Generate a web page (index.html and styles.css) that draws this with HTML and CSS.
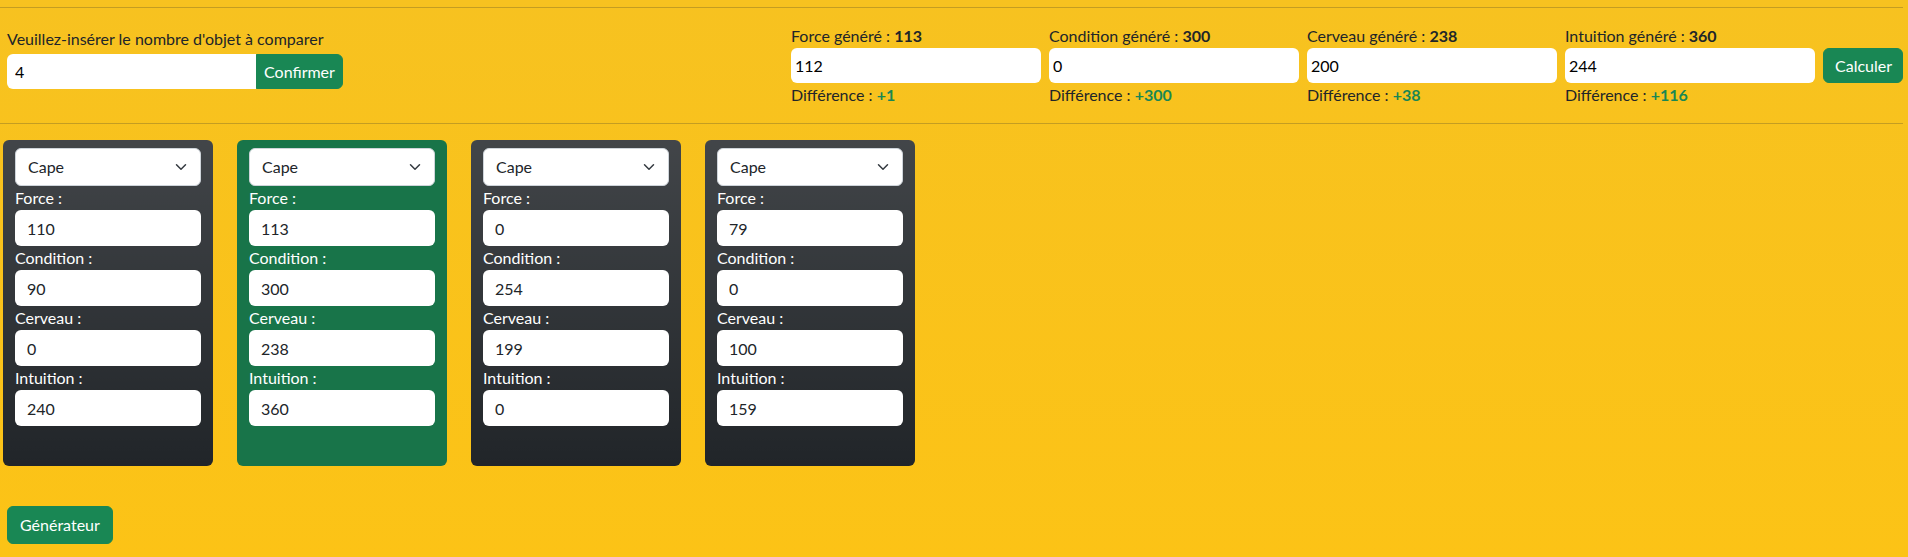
FILE: index.html
```html
<!DOCTYPE html>
<html lang="fr">
<head>
<meta charset="utf-8">
<title>Comparateur</title>
<link rel="stylesheet" href="styles.css">
</head>
<body>
<div class="page">
  <hr class="rule rule-top">
  <div class="top">
    <div class="count">
      <label class="count-label">Veuillez-insérer le nombre d'objet à comparer</label>
      <div class="input-group">
        <input class="count-input" type="text" value="4">
        <button class="btn btn-confirm">Confirmer</button>
      </div>
    </div>
    <div class="targets">
      <div class="target">
        <div class="target-label">Force généré : <b>113</b></div>
        <input class="target-input" type="text" value="112">
        <div class="diff">Différence : <b class="pos">+1</b></div>
      </div>
      <div class="target">
        <div class="target-label">Condition généré : <b>300</b></div>
        <input class="target-input" type="text" value="0">
        <div class="diff">Différence : <b class="pos">+300</b></div>
      </div>
      <div class="target">
        <div class="target-label">Cerveau généré : <b>238</b></div>
        <input class="target-input" type="text" value="200">
        <div class="diff">Différence : <b class="pos">+38</b></div>
      </div>
      <div class="target">
        <div class="target-label">Intuition généré : <b>360</b></div>
        <input class="target-input" type="text" value="244">
        <div class="diff">Différence : <b class="pos">+116</b></div>
      </div>
      <button class="btn btn-calc">Calculer</button>
    </div>
  </div>
  <hr class="rule">
  <div class="cards">
    <div class="card card-dark">
      <div class="select-wrap">
        <select class="item-select"><option>Cape</option></select>
        <svg class="chevron" viewBox="0 0 16 16" width="16" height="12"><path fill="none" stroke="#343a40" stroke-linecap="round" stroke-linejoin="round" stroke-width="2" d="m2 5 6 6 6-6"/></svg>
      </div>
      <label class="stat-label">Force :</label>
      <input class="stat-input" type="text" value="110">
      <label class="stat-label">Condition :</label>
      <input class="stat-input" type="text" value="90">
      <label class="stat-label">Cerveau :</label>
      <input class="stat-input" type="text" value="0">
      <label class="stat-label">Intuition :</label>
      <input class="stat-input" type="text" value="240">
    </div>
    <div class="card card-best">
      <div class="select-wrap">
        <select class="item-select"><option>Cape</option></select>
        <svg class="chevron" viewBox="0 0 16 16" width="16" height="12"><path fill="none" stroke="#343a40" stroke-linecap="round" stroke-linejoin="round" stroke-width="2" d="m2 5 6 6 6-6"/></svg>
      </div>
      <label class="stat-label">Force :</label>
      <input class="stat-input" type="text" value="113">
      <label class="stat-label">Condition :</label>
      <input class="stat-input" type="text" value="300">
      <label class="stat-label">Cerveau :</label>
      <input class="stat-input" type="text" value="238">
      <label class="stat-label">Intuition :</label>
      <input class="stat-input" type="text" value="360">
    </div>
    <div class="card card-dark">
      <div class="select-wrap">
        <select class="item-select"><option>Cape</option></select>
        <svg class="chevron" viewBox="0 0 16 16" width="16" height="12"><path fill="none" stroke="#343a40" stroke-linecap="round" stroke-linejoin="round" stroke-width="2" d="m2 5 6 6 6-6"/></svg>
      </div>
      <label class="stat-label">Force :</label>
      <input class="stat-input" type="text" value="0">
      <label class="stat-label">Condition :</label>
      <input class="stat-input" type="text" value="254">
      <label class="stat-label">Cerveau :</label>
      <input class="stat-input" type="text" value="199">
      <label class="stat-label">Intuition :</label>
      <input class="stat-input" type="text" value="0">
    </div>
    <div class="card card-dark">
      <div class="select-wrap">
        <select class="item-select"><option>Cape</option></select>
        <svg class="chevron" viewBox="0 0 16 16" width="16" height="12"><path fill="none" stroke="#343a40" stroke-linecap="round" stroke-linejoin="round" stroke-width="2" d="m2 5 6 6 6-6"/></svg>
      </div>
      <label class="stat-label">Force :</label>
      <input class="stat-input" type="text" value="79">
      <label class="stat-label">Condition :</label>
      <input class="stat-input" type="text" value="0">
      <label class="stat-label">Cerveau :</label>
      <input class="stat-input" type="text" value="100">
      <label class="stat-label">Intuition :</label>
      <input class="stat-input" type="text" value="159">
    </div>
  </div>
  <button class="btn btn-gen">Générateur</button>
</div>
</body>
</html>
```

FILE: styles.css
```css
* { box-sizing: border-box; }

html, body {
  margin: 0;
  height: 100%;
}

body {
  font-family: Lato, "Liberation Sans", sans-serif;
  font-size: 16px;
  line-height: 24px;
  color: #212529;
  background: linear-gradient(180deg, #f7c220 0%, #fcc316 100%);
  min-height: 557px;
}

.page {
  width: 1903px;
}

.rule {
  margin: 16px 0;
  border: 0;
  border-top: 1px solid #c49d22;
  height: 0;
}

.rule-top {
  margin-top: 7px;
  margin-bottom: 0;
}

.top {
  display: flex;
  align-items: flex-start;
  padding: 16px 0 0 7px;
}

.count {
  margin-top: 3px;
  display: flex;
  flex-direction: column;
  gap: 3px;
}

.count-label {
  display: block;
}

.input-group {
  display: flex;
}

.count-input {
  width: 249px;
  height: 35px;
  border: 0;
  border-radius: 6px 0 0 6px;
  background: #fff;
  padding: 0 8px;
  font: inherit;
  color: #000;
  outline: none;
}

.btn {
  font: inherit;
  color: #fff;
  background: #198754;
  border: 1px solid #198754;
  border-radius: 6px;
  cursor: pointer;
}

.btn-confirm {
  width: 87px;
  height: 35px;
  padding: 0 7px;
  border-radius: 0 6px 6px 0;
}

.targets {
  margin-left: auto;
  display: flex;
  align-items: flex-start;
  gap: 8px;
}

.target {
  width: 250px;
  display: flex;
  flex-direction: column;
}

.target-label b,
.diff b {
  font-weight: 700;
}

.target-input {
  width: 250px;
  height: 35px;
  border: 0;
  border-radius: 6px;
  background: #fff;
  padding: 0 4px;
  font: inherit;
  color: #000;
  outline: none;
}

.pos {
  color: #198754;
}

.btn-calc {
  margin-top: 24px;
  width: 80px;
  height: 35px;
  padding: 0 11px;
}

.cards {
  display: flex;
  gap: 24px;
  padding-left: 3px;
}

.card {
  width: 210px;
  padding: 8px 12px 40px;
  border-radius: 6px;
  display: flex;
  flex-direction: column;
  color: #fff;
}

.card-dark {
  background: #212529 linear-gradient(180deg, rgba(255, 255, 255, 0.15), rgba(255, 255, 255, 0));
}

.card-best {
  background: #187449;
}

.select-wrap {
  position: relative;
}

.item-select {
  appearance: none;
  -webkit-appearance: none;
  display: block;
  width: 100%;
  height: 38px;
  padding: 0 36px 0 12px;
  font: inherit;
  color: #212529;
  background: #fff;
  border: 1px solid #ced4da;
  border-radius: 6px;
  outline: none;
}

.chevron {
  position: absolute;
  right: 12px;
  top: 13px;
  pointer-events: none;
}

.stat-label {
  display: block;
  line-height: 24px;
}

.stat-input {
  display: block;
  width: 100%;
  height: 36px;
  border: 0;
  border-radius: 6px;
  background: #fff;
  padding: 0 12px;
  font: inherit;
  color: #212529;
  outline: none;
}

.btn-gen {
  margin: 40px 0 0 7px;
  height: 38px;
  padding: 0 12px;
}
```
